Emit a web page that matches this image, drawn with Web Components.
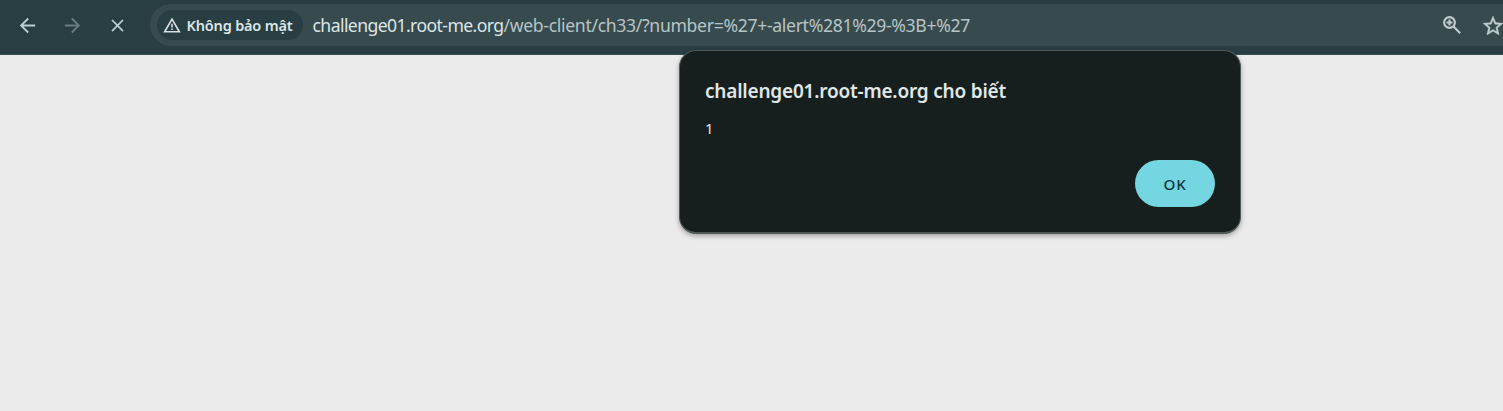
<!DOCTYPE html>
<html lang="vi">
<head>
<meta charset="utf-8">
<title>challenge01.root-me.org</title>
<style>
html,body{margin:0;height:100%;overflow:hidden;background:#ebebeb}
body{font-family:"Noto Sans","Open Sans",sans-serif}
</style>
</head>
<body>
<browser-window>
  <browser-toolbar slot="toolbar">
    <tool-icon name="back"></tool-icon>
    <tool-icon name="forward"></tool-icon>
    <tool-icon name="stop"></tool-icon>
    <address-bar slot="address"></address-bar>
  </browser-toolbar>
  <alert-dialog>
    <fit-text slot="title" width="301">challenge01.root-me.org cho biết</fit-text>
    <span slot="message">1</span>
    <pill-button slot="action"><fit-text width="23">OK</fit-text></pill-button>
  </alert-dialog>
</browser-window>
<script>
const define=(name,html,setup)=>customElements.define(name,class extends HTMLElement{
  constructor(){super();this.attachShadow({mode:'open'}).innerHTML=html;}
  connectedCallback(){if(setup)setup(this);}
});

const icons={
  back:['0 0 24 24',23,'#b9d0d3','<path d="M20 11v2H7.8l5.6 5.6L12 20l-8-8 8-8 1.4 1.4L7.8 11z"/>'],
  forward:['0 0 24 24',23,'#697d80','<path d="M4 11v2h12.2l-5.6 5.6L12 20l8-8-8-8-1.4 1.4 5.6 5.6z"/>'],
  stop:['0 0 24 24',21,'#b9d0d3','<path d="M19 6.4 17.6 5 12 10.6 6.4 5 5 6.4l5.6 5.6L5 17.6 6.4 19l5.6-5.6 5.6 5.6 1.4-1.4-5.6-5.6z"/>'],
  warning:['0 0 18 16',18,'#d5dfe0','<path fill-rule="evenodd" d="M9 0.5 17.8 15.5H.2zM9 3.8 3.1 13.9h11.8zM8.2 6.7h1.6v3.8H8.2zM8.2 11.6h1.6v1.5H8.2z"/>'],
  zoom:['0 0 18 18',18,'#c0cccd','<g fill="none" stroke="currentColor" stroke-width="2.1"><circle cx="6.5" cy="6.5" r="5.4"/><path d="m10.5 10.5 6.7 6.7M6.5 3.5v6M3.5 6.5h6"/></g>'],
  star:['2 2 20 19',20,'#c0cccd','<path stroke="currentColor" stroke-width=".4" d="m22 9.24-7.19-.62L12 2 9.19 8.63 2 9.24l5.46 4.73L5.82 21 12 17.27 18.18 21l-1.63-7.03zM12 15.4l-3.76 2.27 1-4.28-3.32-2.88 4.38-.38L12 6.1l1.71 4.04 4.38.38-3.32 2.88 1 4.28z"/>']
};
define('tool-icon','<style>:host{display:inline-flex;flex:none}svg{display:block;fill:currentColor}</style><span></span>',el=>{
  const [box,size,color,body]=icons[el.getAttribute('name')];
  const b=box.split(' ');
  el.style.color=color;
  el.shadowRoot.querySelector('span').innerHTML=`<svg viewBox="${box}" width="${size}" height="${size*b[3]/b[2]}">${body}</svg>`;
});

define('security-chip',`<style>
:host{display:flex;align-items:center;box-sizing:border-box;width:146px;height:30px;flex:none;padding-left:6px;gap:6px;border-radius:15px;background:#283e43;color:#dce6e7;font-size:14.5px;font-weight:600;line-height:30px}
</style><tool-icon name="warning"></tool-icon><slot></slot>`);

define('address-bar',`<style>
:host{display:flex;align-items:center;flex:1;box-sizing:border-box;height:42px;padding:0 0 0 6.5px;border-radius:21px 0 0 21px;background:#374b4f;min-width:0}
.url{flex:1;min-width:0;display:flex;margin-left:10px;font-size:17.6px;line-height:41px;color:#b7c4c5}
.host{color:#dce6e7}
.star{margin:0 0 0 22px}
</style>
<security-chip><fit-text width="106">Không bảo mật</fit-text></security-chip>
<div class="url"><fit-text class="host" width="191">challenge01.root-me.org</fit-text><fit-text width="466.5">/web-client/ch33/?number=%27+-alert%281%29-%3B+%27</fit-text></div>
<tool-icon name="zoom"></tool-icon><tool-icon class="star" name="star"></tool-icon>`);

define('browser-toolbar',`<style>
:host{display:flex;box-sizing:border-box;height:55px;padding-top:4px;background:#283e43;border-bottom:1px solid #3a4d51;overflow:hidden}
nav{display:grid;grid-template-columns:repeat(3,45px);width:145px;padding-left:5px;height:42px;align-items:center;justify-items:center;flex:none}
</style><nav><slot></slot></nav><slot name="address"></slot>`);

define('pill-button',`<style>
:host{display:block}
button{display:flex;align-items:center;justify-content:center;width:80px;height:47px;padding:0;border:0;border-radius:24px;background:#74d6e0;color:#08363c;font:500 15.2px "Noto Sans","Open Sans",sans-serif}
</style><button><slot></slot></button>`);

define('alert-dialog',`<style>
:host{position:absolute;left:679px;top:50px;box-sizing:border-box;width:562px;height:184px;padding:25px 25px 0;border:1px solid #505958;border-bottom-width:2px;border-radius:17px;background:#171f1e;box-shadow:0 2px 5px rgba(0,0,0,.32);color:#e0e7e7}
h1{margin:0;height:32px;font-size:19px;font-weight:600;line-height:30px}
p{margin:7px 0 0;font-size:15px;line-height:26px}
footer{display:flex;justify-content:flex-end;margin-top:19px}
</style><h1><slot name="title"></slot></h1><p><slot name="message"></slot></p><footer><slot name="action"></slot></footer>`);

define('browser-window','<style>:host{display:block;position:relative;height:411px;background:#ebebeb;overflow:hidden}</style><slot name="toolbar"></slot><slot></slot>');

// Tracks a line of text so that it fills the width it is given.
// Registered last: it measures with the fonts its containers set.
define('fit-text','<style>:host{display:inline-block;flex:none;white-space:pre}</style><slot></slot>',el=>{
  const n=[...el.textContent].length,w=+el.getAttribute('width');
  el.style.letterSpacing=((w-el.getBoundingClientRect().width)/n)+'px';
});
</script>
</body>
</html>
